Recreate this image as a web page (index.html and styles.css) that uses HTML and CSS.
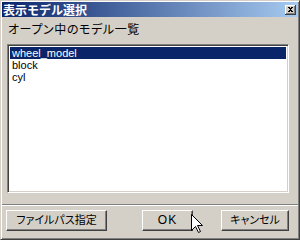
FILE: index.html
```html
<!DOCTYPE html>
<html>
<head>
<meta charset="utf-8">
<link rel="stylesheet" href="styles.css">
</head>
<body>
<div class="window">
  <div class="titlebar">
    <span class="title">表示モデル選択</span>
    <svg class="close" width="11" height="10" viewBox="0 0 11 10" shape-rendering="crispEdges">
      <rect width="11" height="10" fill="#d4d0c8"/>
      <path d="M0 0.5H10M0.5 0V9" stroke="#ffffff"/>
      <path d="M0 9.5H11M10.5 0V10" stroke="#404040"/>
      <path d="M1 8.5H10M9.5 1V9" stroke="#808080"/>
      <path d="M3 2h2v1h-2zM6 2h2v1h-2zM4 3h3v1h-3zM5 4h1v1h-1zM4 5h3v1h-3zM3 6h2v1h-2zM6 6h2v1h-2z" fill="#000"/>
    </svg>
  </div>
  <div class="content">
    <div class="label">オープン中のモデル一覧</div>
    <div class="list">
      <div class="item selected">wheel_model</div>
      <div class="item">block</div>
      <div class="item">cyl</div>
    </div>
    <div class="separator"></div>
    <div class="buttons">
      <button class="btn btn-path">ファイルパス指定</button>
      <button class="btn btn-ok">OK</button>
      <button class="btn btn-cancel">キャンセル</button>
    </div>
  </div>
  <svg class="cursor" width="13" height="20" viewBox="0 0 13 20">
    <path d="M0.5 0.5V16.5L4.5 12.5L7.5 18.5L9.5 17.5L6.5 11.5H11.5Z" fill="#fff" stroke="#000" stroke-linejoin="miter"/>
  </svg>
</div>
</body>
</html>
```
FILE: styles.css
```css
html, body {
  margin: 0;
  padding: 0;
  background: #d4d0c8;
}

.window {
  position: relative;
  width: 300px;
  height: 240px;
  box-sizing: border-box;
  background: #d4d0c8;
  border: 1px solid;
  border-color: #d4d0c8 #404040 #404040 #d4d0c8;
  box-shadow: inset 1px 1px #ffffff, inset -1px -1px #808080;
  padding: 1px;
  display: flex;
  flex-direction: column;
  font-family: "Liberation Sans", "Noto Sans CJK JP", sans-serif;
}

.titlebar {
  height: 15px;
  background: linear-gradient(to right, #0a246a, #a6caf0);
  display: flex;
  align-items: center;
  justify-content: space-between;
  padding: 0 2px 0 1px;
}

.title {
  color: #ffffff;
  font-family: "Noto Sans CJK JP", sans-serif;
  font-weight: bold;
  font-size: 12px;
  line-height: 15px;
}

.close {
  display: block;
}

.content {
  flex: 1;
  display: flex;
  flex-direction: column;
  padding-top: 6px;
}

.label {
  font-family: "Noto Sans CJK JP", sans-serif;
  font-size: 12px;
  line-height: 12px;
  font-feature-settings: "palt";
  letter-spacing: 0.6px;
  color: #000;
  padding-left: 6px;
  height: 12px;
}

.list {
  margin: 9px 0 0 5px;
  width: 282px;
  height: 149px;
  box-sizing: border-box;
  background: #ffffff;
  border: 1px solid;
  border-color: #808080 #ffffff #ffffff #808080;
  box-shadow: inset 1px 1px #404040, inset -1px -1px #d4d0c8;
  padding: 2px 2px;
}

.item {
  font-size: 11px;
  line-height: 12px;
  height: 12px;
  padding-left: 2px;
  color: #000;
}

.item.selected {
  background: #0a246a;
  color: #ffffff;
}

.separator {
  margin-top: 11px;
  height: 1px;
  border-top: 1px solid #808080;
  background: #ffffff;
}

.buttons {
  display: flex;
  margin-top: 4px;
  padding-left: 4px;
}

.btn {
  height: 21px;
  box-sizing: border-box;
  background: #d4d0c8;
  border: 1px solid;
  border-color: #ffffff #404040 #404040 #ffffff;
  box-shadow: inset -1px -1px #808080;
  padding: 0;
  margin: 0;
  font-family: "Liberation Sans", "Noto Sans CJK JP", sans-serif;
  font-size: 11px;
  font-feature-settings: "palt";
  color: #000;
  line-height: 17px;
}

.btn-ok {
  font-size: 12px;
  letter-spacing: 1px;
}

.btn-path {
  width: 101px;
}

.btn-ok {
  width: 51px;
  margin-left: 35px;
}

.btn-cancel {
  width: 68px;
  margin-left: 28px;
}

.cursor {
  position: absolute;
  left: 190px;
  top: 213px;
}
```
